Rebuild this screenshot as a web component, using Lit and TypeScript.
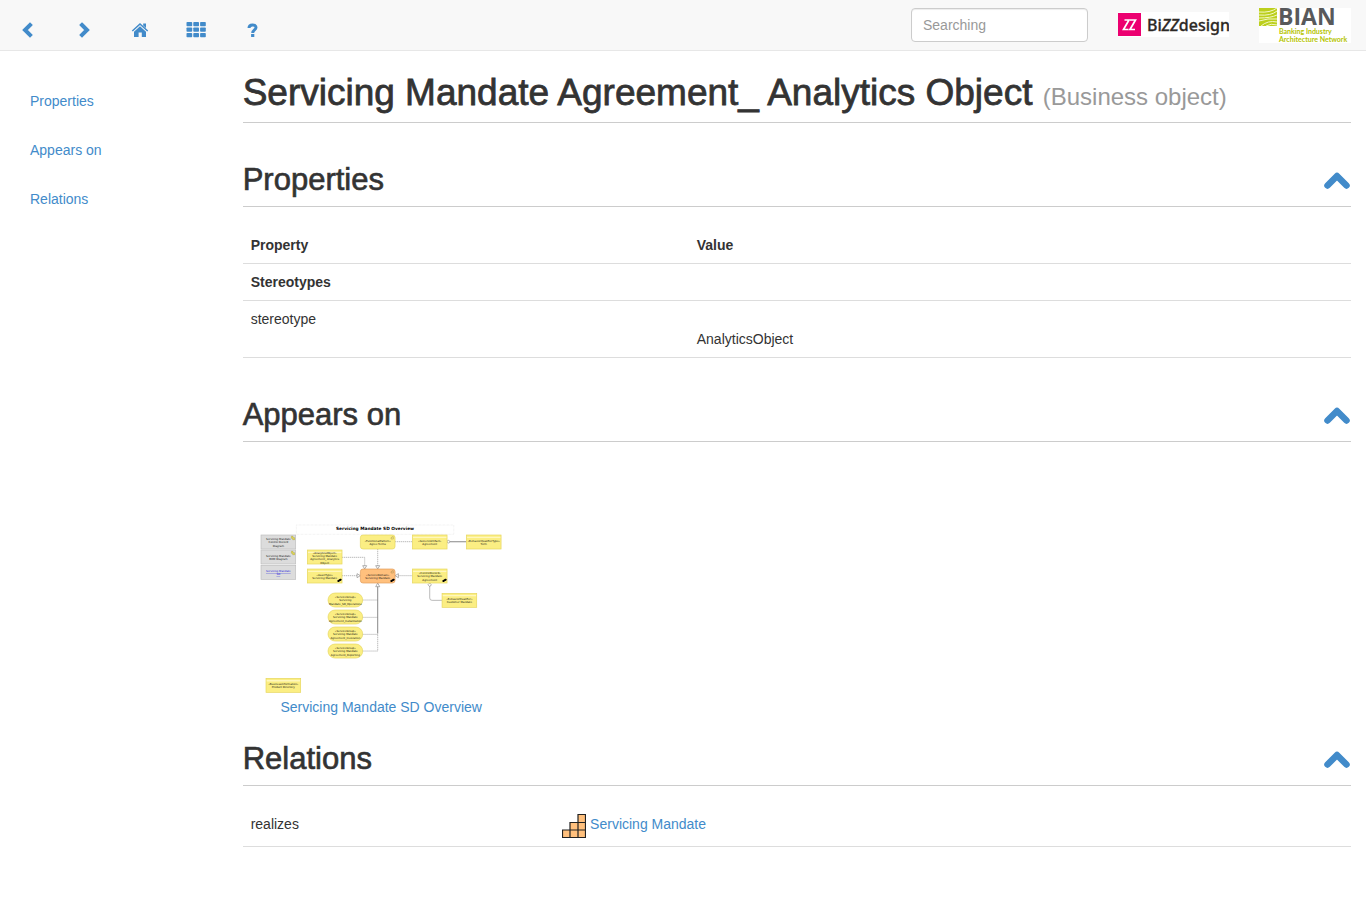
import { LitElement, html, svg, css } from "lit";
import { customElement, property, state } from "lit/decorators.js";

type NodeKind = "grey" | "yellow" | "round" | "orange" | "pill";

interface DiagramNode {
  kind: NodeKind;
  x: number;
  y: number;
  lines: string[];
  linked?: boolean;
  mark?: boolean;
  badge?: boolean;
}

const NODE_W = 104;
const NODE_H = 42;

const NODES: DiagramNode[] = [
  { kind: "grey", x: 9, y: 45, lines: ["Servicing Mandate", "Control Record", "Diagram"], badge: true },
  { kind: "grey", x: 9, y: 90, lines: ["Servicing Mandate", "BOM Diagram"], badge: true },
  { kind: "grey", x: 9, y: 136, lines: ["Servicing Mandate", "SD"], linked: true },
  { kind: "yellow", x: 148, y: 90, lines: ["«AnalyticsObject»", "Servicing Mandate", "Agreement_ Analytics", "Object"] },
  { kind: "yellow", x: 148, y: 147, lines: ["«AssetType»", "Servicing Mandate"], mark: true },
  { kind: "round", x: 307, y: 45, lines: ["«FunctionalPattern»", "Agree Terms"] },
  { kind: "orange", x: 307, y: 147, lines: ["«ServiceDomain»", "Servicing Mandate"], mark: true },
  { kind: "yellow", x: 463, y: 45, lines: ["«GenericArtifact»", "Agreement"] },
  { kind: "yellow", x: 625, y: 45, lines: ["«BehaviorQualifierType»", "Term"] },
  { kind: "yellow", x: 463, y: 147, lines: ["«ControlRecord»", "Servicing Mandate", "Agreement"], mark: true },
  { kind: "yellow", x: 552, y: 220, lines: ["«BehaviorQualifier»", "Customer Mandate"] },
  { kind: "pill", x: 210, y: 219, lines: ["«ServiceGroup»", "Servicing", "Mandate_SD_Operations"] },
  { kind: "pill", x: 210, y: 270, lines: ["«ServiceGroup»", "Servicing Mandate", "Agreement_Instantiation"] },
  { kind: "pill", x: 210, y: 321, lines: ["«ServiceGroup»", "Servicing Mandate", "Agreement_Invocation"] },
  { kind: "pill", x: 210, y: 372, lines: ["«ServiceGroup»", "Servicing Mandate", "Agreement_Reporting"] },
  { kind: "yellow", x: 24, y: 475, lines: ["«BusinessInformation»", "Product Directory"] },
];

const RADIUS: Record<NodeKind, number> = { grey: 0, yellow: 0, round: 8, orange: 8, pill: 21 };

@customElement("overview-diagram")
export class OverviewDiagram extends LitElement {
  static styles = css`
    :host { display: block; }
    svg { display: block; width: 100%; height: auto; }
    text { font-family: "DejaVu Sans", sans-serif; font-size: 8px; text-anchor: middle; fill: #111; }
    .title { font-size: 13px; font-weight: bold; fill: #000; }
    .frame { fill: none; stroke: #ccc; stroke-dasharray: 2 2; }
    .line { fill: none; stroke: #999; stroke-width: 2; }
    .dash { stroke-dasharray: 4 2; }
    .solid { stroke: #888; stroke-width: 3; }
    .head { fill: #fff; stroke: #888; stroke-width: 2; }
    .grey { fill: #dcdcdc; stroke: #bdbdbd; stroke-width: 2; }
    .yellow, .round, .pill { fill: #fbee83; stroke: #e6d65c; stroke-width: 2; }
    .orange { fill: #ffc07d; stroke: #e09a58; stroke-width: 2; }
    .band { stroke: #fff7bd; stroke-width: 4; }
    .linked { fill: #22d; text-decoration: underline; }
    .badge { fill: #eee34a; stroke: #8a8430; }
    .mark { stroke: #000; stroke-width: 6; stroke-linecap: round; fill: none; }
    .glyph { fill: none; stroke: #8a7a40; stroke-width: 1; }
  `;

  private node(n: DiagramNode) {
    const cx = n.x + NODE_W / 2;
    const top = n.y + (n.lines.length > 3 ? 11 : 30 - n.lines.length * 5);
    return svg`
      <rect class=${n.kind} x=${n.x} y=${n.y} width=${NODE_W} height=${NODE_H} rx=${RADIUS[n.kind]}></rect>
      ${n.kind === "yellow" ? svg`<path class="band" d="M${n.x + 2} ${n.y + 7}h${NODE_W - 4}"></path>` : null}
      ${n.lines.map((t, i) => svg`<text class=${n.linked ? "linked" : ""} x=${cx} y=${top + i * 10}>${t}</text>`)}
      ${n.badge ? svg`<path class="badge" d="M${n.x + 91} ${n.y + 4}h5v4h5v6h-6v-4h-4z"></path>` : null}
      ${n.kind === "round" || n.kind === "orange"
        ? svg`<path class="glyph" d="M${n.x + 92} ${n.y + 12}v-4h3v-3h4v7z"></path>` : null}
      ${n.mark ? svg`<path class="mark" d="M${n.x + 93} ${n.y + 36}l2 -1M${n.x + 98} ${n.y + 33}l2 -1"></path>` : null}
    `;
  }

  render() {
    return html`
      <svg viewBox="0 0 741 528" role="img" aria-label="Servicing Mandate SD Overview">
        <rect class="frame" x="115" y="15" width="472" height="28"></rect>
        <text class="title" x="351" y="30">Servicing Mandate SD Overview</text>
        <path class="line dash" d="M251 112H320V140M251 167H300M359 87V140M411 65H463M418 167H463"></path>
        <path class="line dash" d="M313 240H359M313 292H359M313 343H359M313 393H359V340"></path>
        <path class="line solid" d="M359 198V340M575 65H625"></path>
        <path class="line" d="M515 198V234Q515 241 522 241H552"></path>
        <path class="head" d="M314 137h12l-6 10zM353 137h12l-6 10zM297 161v12l10 -6zM421 161v12l-10 -6zM353 200h12l-6 -11z"></path>
        <circle class="head" cx="571" cy="65" r="4"></circle>
        <path class="head" d="M510 194l5 -5l5 5l-5 6z"></path>
        ${NODES.map((n) => this.node(n))}
      </svg>
    `;
  }
}

@customElement("page-section")
export class PageSection extends LitElement {
  @property() heading = "";
  @state() private open = true;

  static styles = css`
    :host { display: block; }
    .head {
      display: flex;
      align-items: center;
      justify-content: space-between;
      padding-bottom: 10px;
      border-bottom: 1px solid #ccc;
      margin-bottom: 20px;
    }
    h2 {
      margin: 0;
      font-size: 31px;
      line-height: 32px;
      font-weight: 500;
      -webkit-text-stroke: thin #333;
    }
    button { border: 0; background: none; padding: 0; cursor: pointer; display: block; }
    svg { display: block; }
    path { fill: none; stroke: #428bca; stroke-width: 6.5; stroke-linecap: round; stroke-linejoin: round; }
  `;

  render() {
    return html`
      <div class="head">
        <h2>${this.heading}</h2>
        <button type="button" aria-label="Toggle ${this.heading}" aria-expanded=${this.open}
          @click=${() => (this.open = !this.open)}>
          <svg width="28" height="20" viewBox="0 0 28 20"><path d="M4.500 15.500L14 6L23.500 15.500"></path></svg>
        </button>
      </div>
      ${this.open ? html`<slot></slot>` : null}
    `;
  }
}

@customElement("app-root")
export class AppRoot extends LitElement {
  static styles = css`
    :host {
      display: block;
      font-family: "Liberation Sans", Arial, sans-serif;
      font-size: 14px;
      line-height: 20px;
      color: #333;
      background: #fff;
    }
    * { box-sizing: border-box; }
    a { color: #428bca; text-decoration: none; }
    a:hover { text-decoration: underline; }
    .bar {
      display: flex;
      align-items: center;
      justify-content: space-between;
      height: 51px;
      background: #f8f8f8;
      border-bottom: 1px solid #e7e7e7;
    }
    .tools { display: flex; padding-top: 10px; }
    .tools a { display: flex; justify-content: center; width: 56px; }
    .tools svg { display: block; fill: #428bca; }
    .stroke { fill: none; stroke: #428bca; stroke-width: 4; stroke-linecap: square; }
    .mark { fill: none; stroke: #428bca; stroke-width: 3; }
    .right { display: flex; align-items: center; gap: 30px; padding-right: 15px; }
    .right a, .right svg { display: block; }
    input {
      display: block;
      width: 177px;
      height: 34px;
      padding: 6px 11px;
      border: 1px solid #ccc;
      border-radius: 4px;
      background: #fff;
      box-shadow: inset 0 1px 1px rgba(0, 0, 0, 0.075);
      font: inherit;
      color: #555;
    }
    input::placeholder { color: #999; opacity: 1; }
    .brand { font: 500 16px "Noto Sans", sans-serif; fill: #2d2926; stroke: #2d2926; stroke-width: 0.3px; }
    .slant { font-style: italic; }
    .bian { font: bold 23px "Open Sans", sans-serif; fill: #58595b; }
    .tag { font: bold 7px "Lato", sans-serif; fill: #b5c400; }
    .page { display: grid; grid-template-columns: minmax(0, 1fr) minmax(0, 5fr); }
    .side { display: flex; flex-direction: column; gap: 9px; padding: 30px 15px; }
    .side a { padding: 10px 15px; }
    main { padding: 22px 15px 50px; }
    h1 {
      margin: 0 0 41px;
      padding-bottom: 9px;
      border-bottom: 1px solid #ccc;
      font-size: 37px;
      line-height: 40px;
      font-weight: 500;
      -webkit-text-stroke: thin #333;
    }
    h1 small { font-size: 24px; line-height: 24px; font-weight: 400; color: #999; -webkit-text-stroke: 0; }
    table { width: 100%; border-collapse: separate; border-spacing: 0; table-layout: fixed; }
    th, td { padding: 8px; border-bottom: 1px solid #ddd; text-align: left; vertical-align: top; }
    .props { margin-bottom: 41px; }
    .name { width: 40.25%; }
    .low { padding-top: 28px; }
    .kind { width: 28.1%; }
    .rel { display: flex; gap: 4px; }
    .rel svg { display: block; }
    .thumbs { display: grid; grid-template-columns: repeat(4, minmax(0, 1fr)); padding-top: 58px; margin-bottom: 26px; }
    figure { margin: 0; padding: 0 15px; }
    figcaption { text-align: center; padding-top: 1px; }
  `;

  render() {
    return html`
      <nav class="bar">
        <div class="tools">
          <a href="#back" aria-label="Back"><svg width="20" height="20" viewBox="0 0 20 20"><path class="stroke" d="M12 5L7 10L12 15"></path></svg></a>
          <a href="#forward" aria-label="Forward"><svg width="20" height="20" viewBox="0 0 20 20"><path class="stroke" d="M8 5L13 10L8 15"></path></svg></a>
          <a href="#home" aria-label="Home"><svg width="20" height="20" viewBox="0 0 20 20"><path d="M10 3L18.200 10.600L17.200 11.600L10 5L2.800 11.600L1.800 10.600ZM13.200 3.400H16V8L13.200 5.400ZM10 6.300L16 11.800V17H11.800V12.500H8.600V17H4V11.800Z"></path></svg></a>
          <a href="#views" aria-label="Views"><svg width="20" height="20" viewBox="0 0 20 20">
            ${[0, 1, 2].map((r) => [0, 1, 2].map((c) => svg`<rect x=${0.5 + c * 6.8} y=${2 + r * 5.5} width="5.7" height="4.300" rx="0.800"></rect>`))}
          </svg></a>
          <a href="#help" aria-label="Help"><svg width="20" height="20" viewBox="0 0 20 20"><path class="mark" d="M7 8C7 4 14 4 14 7.500C14 10 10.700 9.800 10.700 13"></path><rect x="9.100" y="14" width="3.200" height="3"></rect></svg></a>
        </div>
        <div class="right">
          <input type="text" placeholder="Searching" aria-label="Searching" />
          <a href="#bizzdesign" aria-label="BiZZdesign">
            <svg width="111" height="26" viewBox="0 0 111 26">
              <rect width="111" height="25" fill="#fff"></rect>
              <rect y="1" width="23" height="23" fill="#ec0070"></rect>
              <path d="M6.500 8H11L5.500 17.500H10.500M12 8H17.500L12 17.500H17" fill="none" stroke="#fff" stroke-width="1.700"></path>
              <text class="brand" x="29" y="19">Bi<tspan class="slant">ZZ</tspan>design</text>
            </svg>
          </a>
          <a href="#bian" aria-label="BIAN">
            <svg width="92" height="50" viewBox="0 -8 92 50">
              <rect width="92" height="35" fill="#fff"></rect>
              <rect width="18" height="18" fill="#bccf1d"></rect>
              <path d="M0 4Q11 5 18 0M0 7Q12 8 18 3M0 10Q12 10 18 7M0 13Q9 10 18 11M2 18Q9 12 18 14M7 18Q12 15 18 17" fill="none" stroke="#f4f8c8" stroke-width="1"></path>
              <text class="bian" x="19" y="17">BIAN</text>
              <text class="tag" x="20" y="26">Banking Industry</text>
              <text class="tag" x="20" y="34">Architecture Network</text>
            </svg>
          </a>
        </div>
      </nav>
      <div class="page">
        <nav class="side">
          <a href="#properties">Properties</a>
          <a href="#appears">Appears on</a>
          <a href="#relations">Relations</a>
        </nav>
        <main>
          <h1>Servicing Mandate Agreement_ Analytics Object <small>(Business object)</small></h1>
          <page-section id="properties" heading="Properties">
            <table class="props">
              <thead>
                <tr><th class="name">Property</th><th>Value</th></tr>
              </thead>
              <tbody>
                <tr><th colspan="2">Stereotypes</th></tr>
                <tr><td>stereotype</td><td class="low">AnalyticsObject</td></tr>
              </tbody>
            </table>
          </page-section>
          <page-section id="appears" heading="Appears on">
            <div class="thumbs">
              <figure>
                <a href="#overview"><overview-diagram></overview-diagram></a>
                <figcaption><a href="#overview">Servicing Mandate SD Overview</a></figcaption>
              </figure>
            </div>
          </page-section>
          <page-section id="relations" heading="Relations">
            <table>
              <tbody>
                <tr>
                  <td class="kind">realizes</td>
                  <td>
                    <div class="rel">
                      <svg width="24" height="24" viewBox="0 0 24 24" aria-hidden="true">
                        <path d="M0.500 23.500V16H8V8.500H16V0.500H23.500V23.500ZM8 23.500V16H23.500M16 23.500V8.500H23.500" fill="#ffc07d" stroke="#222" stroke-width="1.200"></path>
                      </svg>
                      <a href="#mandate">Servicing Mandate</a>
                    </div>
                  </td>
                </tr>
              </tbody>
            </table>
          </page-section>
        </main>
      </div>
    `;
  }
}
